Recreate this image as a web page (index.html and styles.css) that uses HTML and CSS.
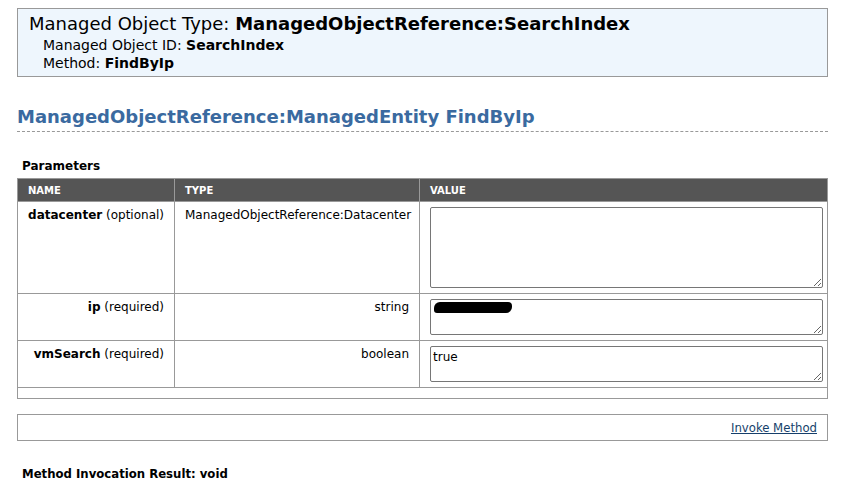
FILE: index.html
```html
<!DOCTYPE html>
<html>
<head>
<meta charset="utf-8">
<title>FindByIp</title>
<link rel="stylesheet" href="styles.css">
</head>
<body>
<div class="page">
  <div class="objinfo">
    <div class="objtype">Managed Object Type: <b>ManagedObjectReference:SearchIndex</b></div>
    <div class="objline">Managed Object ID: <b>SearchIndex</b></div>
    <div class="objline">Method: <b>FindByIp</b></div>
  </div>

  <h2 class="method-title">ManagedObjectReference:ManagedEntity FindByIp</h2>

  <div class="section-label">Parameters</div>
  <table class="params">
    <colgroup>
      <col class="c-name">
      <col class="c-type">
      <col class="c-value">
    </colgroup>
    <thead>
      <tr><th>NAME</th><th>TYPE</th><th>VALUE</th></tr>
    </thead>
    <tbody>
      <tr class="row-tall">
        <td class="pname"><b>datacenter</b> (optional)</td>
        <td class="ptype">ManagedObjectReference:Datacenter</td>
        <td class="pvalue"><textarea class="field field-tall"></textarea></td>
      </tr>
      <tr>
        <td class="pname"><b>ip</b> (required)</td>
        <td class="ptype">string</td>
        <td class="pvalue"><div class="field-wrap"><textarea class="field"></textarea><span class="redact"></span></div></td>
      </tr>
      <tr>
        <td class="pname"><b>vmSearch</b> (required)</td>
        <td class="ptype">boolean</td>
        <td class="pvalue"><textarea class="field">true</textarea></td>
      </tr>
      <tr class="row-spacer"><td colspan="3"></td></tr>
    </tbody>
  </table>

  <div class="invoke-bar"><a href="#" class="invoke-link">Invoke Method</a></div>

  <div class="result">Method Invocation Result: void</div>
</div>
</body>
</html>
```

FILE: styles.css
```css
html, body {
  margin: 0;
  padding: 0;
  background: #fff;
}

body {
  font-family: "DejaVu Sans", Verdana, sans-serif;
  color: #000;
}

.page {
  padding: 8px 17px 0 17px;
}

/* object summary box */
.objinfo {
  border: 1px solid #999;
  background: #eef6fd;
  padding: 3px 11px 4px 11px;
  height: 60px;
}

.objtype {
  font-size: 18px;
  line-height: 24px;
}

.objline {
  font-size: 14px;
  line-height: 18px;
  padding-left: 14px;
}

/* method heading with dashed rule */
.method-title {
  margin: 28px 0 0 0;
  padding: 0 0 2px 0;
  font-size: 18px;
  line-height: 24px;
  color: #3a6aa0;
  border-bottom: 1px dashed #999;
}

.section-label {
  margin: 26px 0 0 5px;
  font-size: 12px;
  font-weight: bold;
  line-height: 16px;
}

/* parameter table */
.params {
  margin-top: 4px;
  width: 100%;
  border-collapse: collapse;
  table-layout: fixed;
  border: 1px solid #999;
}

.c-name { width: 157px; }
.c-type { width: 245px; }

.params th {
  background: #555;
  color: #fff;
  font-size: 10px;
  font-weight: bold;
  text-align: left;
  height: 22px;
  padding: 0 10px;
  border-left: 1px solid #999;
  border-right: 1px solid #999;
}

.params td {
  border: 1px solid #999;
  font-size: 12px;
  line-height: 16px;
    vertical-align: top;
  padding: 5px 10px;
}

.params td.pname,
.params td.ptype {
  text-align: right;
}

.params td.pvalue {
  padding: 5px 4px 5px 10px;
}

.row-spacer td {
  height: 10px;
  padding: 0;
}

.field-wrap {
  position: relative;
}

.field {
  display: block;
  box-sizing: border-box;
  width: 100%;
  height: 36px;
  margin: 0;
  padding: 3px 2px;
  border: 1px solid #767676;
  border-radius: 2px;
  font-family: "DejaVu Sans", Verdana, sans-serif;
  font-size: 12px;
  line-height: 15px;
  color: #000;
  background: #fff;
  resize: vertical;
}

.field-tall {
  height: 81px;
}

/* scribbled-out value in the ip field */
.redact {
  position: absolute;
  left: 4px;
  top: 3px;
  width: 78px;
  height: 11px;
  background: #000;
  border-radius: 6px 4px 6px 3px;
}

/* invoke bar */
.invoke-bar {
  margin-top: 15px;
  border: 1px solid #999;
  height: 25px;
  display: flex;
  align-items: center;
  justify-content: flex-end;
  padding-right: 10px;
}

.invoke-link {
  font-family: "DejaVu Sans Condensed", "DejaVu Sans", sans-serif;
  font-size: 13px;
  color: #163f6b;
  text-decoration: underline;
}

.result {
  margin: 25px 0 0 5px;
  font-family: "DejaVu Sans Condensed", "DejaVu Sans", sans-serif;
  font-weight: bold;
  font-size: 13px;
}
```
